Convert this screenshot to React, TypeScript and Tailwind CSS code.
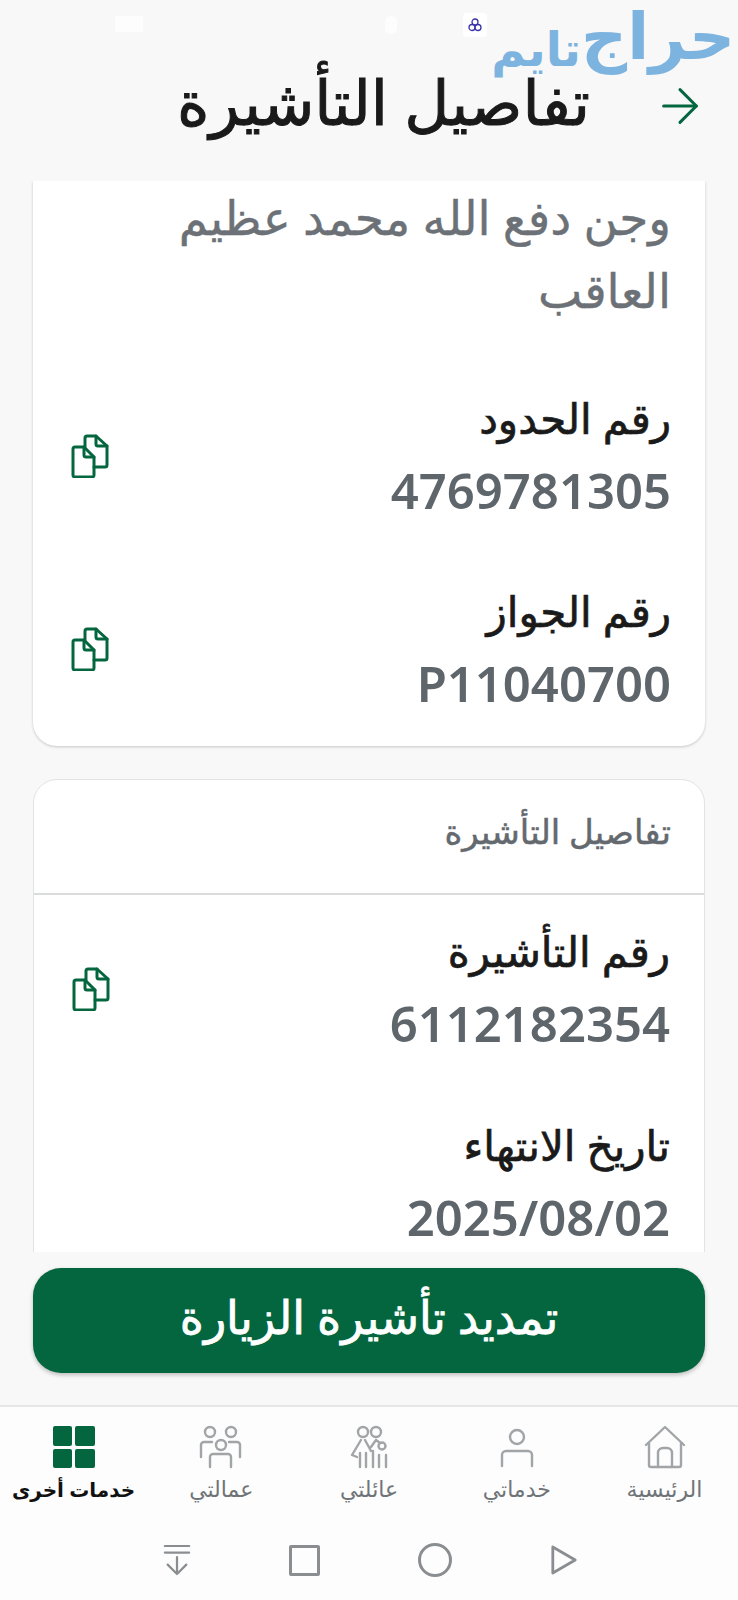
import { ArrowRight } from 'lucide-react';

const FONT = "font-['Noto_Sans','DejaVu_Sans',sans-serif]";

function CopyIcon() {
  return (
    <svg className="mt-[4px]" width="40" height="44" viewBox="0 0 40 44" fill="none" stroke="#04663f" strokeWidth="3" strokeLinejoin="round" strokeLinecap="round">
      <path d="M2 15a2 2 0 0 1 2-2h9l10 10v18a2 2 0 0 1-2 2H4a2 2 0 0 1-2-2z" />
      <path d="M13 13v8a2 2 0 0 0 2 2h8" />
      <path d="M14 13V4a2 2 0 0 1 2-2h9l11 10v19a2 2 0 0 1-2 2H23" />
      <path d="M25 2v8a2 2 0 0 0 2 2h9" />
    </svg>
  );
}

function Field({ label, value, copy }: { label: string; value: string; copy?: boolean }) {
  return (
    <div className="flex items-center justify-between pr-[34px] pl-[38px]">
      <div className="flex flex-col items-start gap-[14px]">
        <div className="text-[42px] leading-[58px] font-normal text-[#1a1a1a] [-webkit-text-stroke-width:0.7px]">{label}</div>
        <div dir="ltr" className="text-[49px] leading-[58px] font-semibold text-[#5f666b] font-['Noto_Sans',sans-serif]">{value}</div>
      </div>
      {copy && <CopyIcon />}
    </div>
  );
}

function NavItem({ label, active, children }: { label: string; active?: boolean; children: React.ReactNode }) {
  return (
    <div className="flex flex-col items-center w-[147px] shrink-0">
      <div className="h-[44px] flex items-center justify-center">{children}</div>
      <div className={`leading-[36px] whitespace-nowrap ${active ? 'mt-[3px] text-[20px] font-bold text-[#111]' : 'mt-[1px] text-[22px] font-medium text-[#6f7478]'}`}>{label}</div>
    </div>
  );
}

const grayIcon = { fill: 'none', stroke: '#a2a5a8', strokeWidth: 2.4, strokeLinejoin: 'round' as const, strokeLinecap: 'round' as const };

export default function App() {
  return (
    <div dir="rtl" className={`relative w-[738px] h-[1600px] overflow-hidden flex flex-col bg-[#f8f8f8] ${FONT}`}>
      {/* Header */}
      <div className="h-[181px] shrink-0 flex items-end pb-[38px] pr-[30px]">
        <div className="flex items-center gap-[62px]">
          <div className="pt-[10px]">
            <ArrowRight size={56} strokeWidth={1.3} color="#04663f" />
          </div>
          <div className="text-[62px] leading-[84px] font-normal text-[#1a1a1a] [-webkit-text-stroke-width:1px]">تفاصيل التأشيرة</div>
        </div>
      </div>

      {/* Watermark + status bar remnants */}
      <div className="absolute top-[5px] right-[3px] flex items-start">
        <span className="text-[64px] leading-[60px] font-bold text-[#7db3df]">حراج</span>
        <span className="mt-[18px] text-[47px] leading-[50px] font-bold text-[#7db3df]">تايم</span>
      </div>
      <div className="absolute top-[13px] left-[463px] w-[24px] h-[24px] bg-white rounded-[4px] flex items-center justify-center">
        <svg width="14" height="16" viewBox="0 0 14 16" fill="none" stroke="#3a34a8" strokeWidth="1.3">
          <circle cx="7" cy="5" r="3" />
          <circle cx="4" cy="10.5" r="3" />
          <circle cx="10" cy="10.5" r="3" />
        </svg>
      </div>
      <div className="absolute top-[16px] left-[115px] w-[28px] h-[16px] bg-white/70" />
      <div className="absolute top-[16px] left-[385px] w-[12px] h-[18px] bg-white/70 rounded-full" />

      {/* Content */}
      <div className="h-[1071px] shrink-0 overflow-hidden px-[33px]">
        <div className="h-[565px] bg-white rounded-b-[24px] shadow-[0_1px_3px_rgba(0,0,0,0.2)] overflow-hidden">
          <div className="pr-[34px] pl-[38px] text-[47px] leading-[73px] font-normal text-[#6b7176] [-webkit-text-stroke-width:0.4px]">
            وجن دفع الله محمد عظيم العاقب
          </div>
          <div className="mt-[62px] flex flex-col gap-[63px]">
            <Field label="رقم الحدود" value="4769781305" copy />
            <Field label="رقم الجواز" value="P11040700" copy />
          </div>
        </div>

        <div className="mt-[33px] h-[600px] bg-white rounded-t-[24px] border border-[#e2e3e4] overflow-hidden">
          <div className="h-[115px] border-b-2 border-[#dadbdc] flex items-center pr-[33px] pb-[10px] text-[34px] font-normal text-[#63696e] [-webkit-text-stroke-width:0.5px]">
            تفاصيل التأشيرة
          </div>
          <div className="mt-[27px] flex flex-col gap-[64px]">
            <Field label="رقم التأشيرة" value="6112182354" copy />
            <Field label="تاريخ الانتهاء" value="2025/08/02" />
          </div>
        </div>
      </div>

      {/* Action button */}
      <div className="px-[33px] pt-[16px] h-[153px] shrink-0">
        <div className="h-[105px] pb-[8px] rounded-[28px] bg-[#04663f] shadow-[0_2px_4px_rgba(0,0,0,0.25)] flex items-center justify-center text-[46px] font-normal text-white [-webkit-text-stroke-width:0.8px]">
          تمديد تأشيرة الزيارة
        </div>
      </div>

      {/* Bottom nav */}
      <div className="flex-1 bg-[#fdfdfd] border-t-2 border-[#e6e7e8] flex flex-col">
        <div className="flex justify-between pt-[18px]">
          <NavItem label="الرئيسية">
            <svg width="42" height="44" viewBox="0 0 42 44" {...grayIcon}>
              <path d="M2 20 21 2l19 18" />
              <path d="M5 18v22a2 2 0 0 0 2 2h28a2 2 0 0 0 2-2V18" />
              <path d="M14 42V28a5 5 0 0 1 5-5h4a5 5 0 0 1 5 5v14" />
            </svg>
          </NavItem>
          <NavItem label="خدماتي">
            <svg width="36" height="44" viewBox="0 0 36 44" {...grayIcon}>
              <circle cx="18" cy="12" r="7" />
              <path d="M3 41V30a4 4 0 0 1 4-4h22a4 4 0 0 1 4 4v11" />
            </svg>
          </NavItem>
          <NavItem label="عائلتي">
            <svg width="40" height="44" viewBox="0 0 40 44" {...grayIcon}>
              <circle cx="14" cy="7" r="5" />
              <circle cx="27" cy="7" r="5" />
              <circle cx="33" cy="21" r="3.5" />
              <path d="M12 15 3 30l5 2M16 15l6 11M27 15l-5 7M27 15l4 3" />
              <path d="M11 42V28M17 42V28M24 42V26M30 42V30M37 42V30" />
            </svg>
          </NavItem>
          <NavItem label="عمالتي">
            <svg width="44" height="44" viewBox="0 0 44 44" {...grayIcon}>
              <circle cx="11" cy="7" r="5" />
              <circle cx="32" cy="7" r="5" />
              <circle cx="22" cy="20" r="5" />
              <path d="M2 32V20a3 3 0 0 1 3-3h8M41 32V20a3 3 0 0 0-3-3h-8" />
              <path d="M11 42V32a3 3 0 0 1 3-3h15a3 3 0 0 1 3 3v10" />
            </svg>
          </NavItem>
          <NavItem label="خدمات أخرى" active>
            <div className="grid grid-cols-2 gap-[3px] w-[42px] h-[42px]">
              <div className="bg-[#04663f] rounded-[2px]" />
              <div className="bg-[#04663f] rounded-[2px]" />
              <div className="bg-[#04663f] rounded-[2px]" />
              <div className="bg-[#04663f] rounded-[2px]" />
            </div>
          </NavItem>
        </div>

        {/* Android navigation bar */}
        <div dir="ltr" className="mt-[35px] flex items-center justify-center gap-[98px] pl-[2px]">
          <svg width="28" height="34" viewBox="0 0 30 34" fill="none" stroke="#8b8e91" strokeWidth="2.4" strokeLinecap="round" strokeLinejoin="round">
            <path d="M2 2h26M2 9h26M15 14v18M5 22l10 10 10-10" />
          </svg>
          <div className="w-[31px] h-[31px] border-[3px] border-[#8b8e91] rounded-[2px]" />
          <div className="w-[34px] h-[34px] border-[3px] border-[#8b8e91] rounded-full" />
          <svg width="28" height="34" viewBox="0 0 30 34" fill="none" stroke="#8b8e91" strokeWidth="3" strokeLinejoin="round">
            <path d="M3 3 27 17 3 31z" />
          </svg>
        </div>
      </div>
    </div>
  );
}
